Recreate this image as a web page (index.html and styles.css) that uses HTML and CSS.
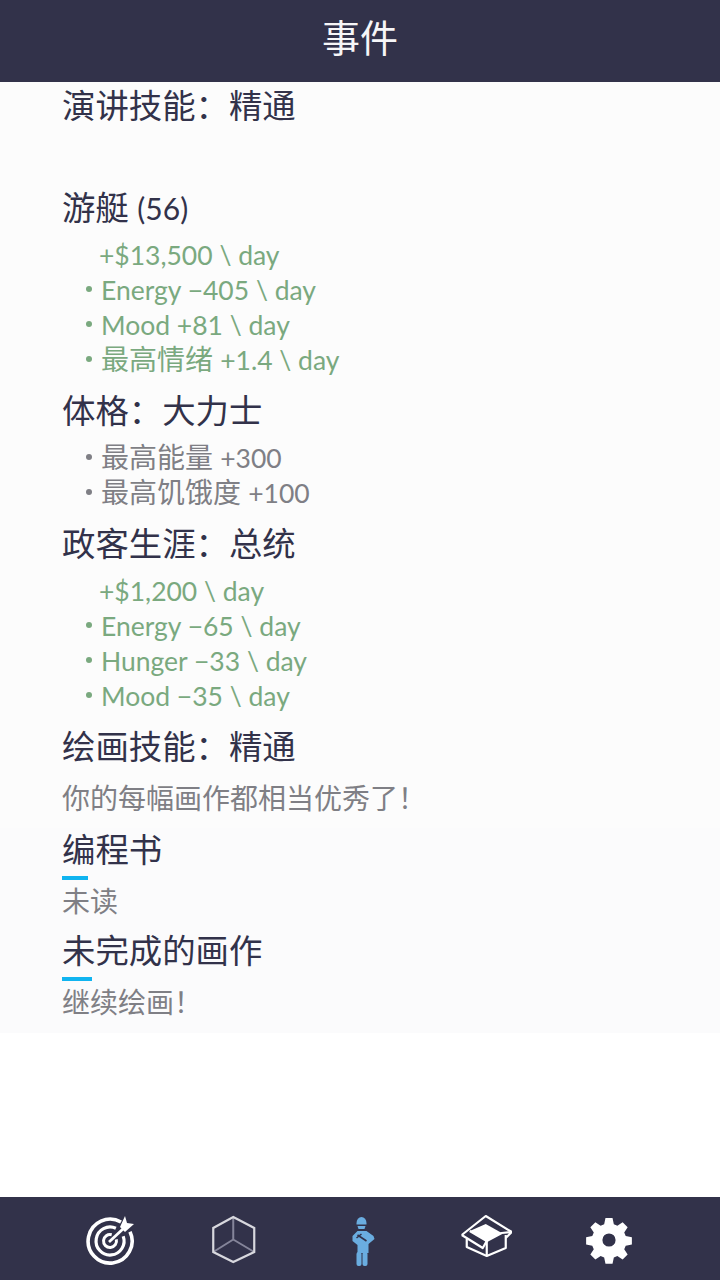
FILE: index.html
```html
<!DOCTYPE html>
<html lang="zh-CN">
<head>
    <meta charset="UTF-8">
    <title>事件</title>
    <link rel="stylesheet" href="styles.css">
</head>
<body>
    <header class="top-bar">事件</header>

    <main class="content">
        <section class="events">
            <h2 class="title">演讲技能：精通</h2>
            <div class="spacer"></div>

            <h2 class="title">游艇 <span class="latin">(56)</span></h2>
            <ul class="stats green">
                <li class="no-dot"><span class="latin">+$13,500 \ day</span></li>
                <li><span class="latin">Energy −405 \ day</span></li>
                <li><span class="latin">Mood +81 \ day</span></li>
                <li>最高情绪 <span class="latin">+1.4 \ day</span></li>
            </ul>

            <h2 class="title">体格：大力士</h2>
            <ul class="stats grey">
                <li>最高能量 <span class="latin">+300</span></li>
                <li>最高饥饿度 <span class="latin">+100</span></li>
            </ul>

            <h2 class="title">政客生涯：总统</h2>
            <ul class="stats green">
                <li class="no-dot"><span class="latin">+$1,200 \ day</span></li>
                <li><span class="latin">Energy −65 \ day</span></li>
                <li><span class="latin">Hunger −33 \ day</span></li>
                <li><span class="latin">Mood −35 \ day</span></li>
            </ul>

            <h2 class="title">绘画技能：精通</h2>
            <p class="note">你的每幅画作都相当优秀了！</p>
        </section>

        <section class="items">
            <div class="item">
                <h2 class="title">编程书</h2>
                <div class="underline short"></div>
                <p class="note">未读</p>
            </div>
            <div class="item">
                <h2 class="title">未完成的画作</h2>
                <div class="underline"></div>
                <p class="note">继续绘画！</p>
            </div>
        </section>
    </main>

    <nav class="bottom-bar">
        <svg class="icon" width="56" height="56" viewBox="0 0 56 56">
            <g fill="none" stroke="#fff">
                <path stroke-width="3.600" d="M39 12A22 22 0 1 0 48 21.700"/>
                <path stroke-width="3.200" d="M33.900 18.300A14 14 0 1 0 41.200 26.200"/>
                <path stroke-width="3" d="M29.700 24.700A6.500 6.500 0 1 0 34.300 29.300"/>
                <path stroke-width="2.800" d="M27 32L42 18"/>
            </g>
            <path fill="#fff" d="M38 17L43 6l2 7 7 1-9 8z"/>
        </svg>
        <svg class="icon" width="56" height="56" viewBox="0 0 56 56">
            <g transform="translate(-1.750 0)">
                <path fill="none" stroke="#85859a" stroke-width="2" d="M28 29.500V7M28 29.500L8 42M28 29.500L49 42"/>
                <path fill="none" stroke="#d8d8de" stroke-width="2.200" d="M28 7L49 18V42L28 52L8 42V18z"/>
            </g>
        </svg>
        <svg class="icon" width="56" height="56" viewBox="0 0 56 56">
            <g transform="translate(0.500 0)">
                <g fill="#6aade0">
                    <path d="M24 13a5 6 0 0 1 10 0v1.500h-10z"/>
                    <path d="M25 16h8l-1 3h-6z"/>
                    <path d="M25 21h9l7 5 1 3-6 5v9h-11v-8l-5-4 0-5z"/>
                    <rect x="24" y="42" width="5" height="14" rx="2"/>
                    <rect x="30" y="42" width="5" height="14" rx="2"/>
                </g>
                <path fill="none" stroke="#32324a" stroke-width="1.600" d="M25 25l9 6M24 28l5-4"/>
            </g>
        </svg>
        <svg class="icon" width="56" height="56" viewBox="0 0 56 56">
            <g transform="translate(2.750 0)">
                <g fill="none" stroke="#fff" stroke-width="2.200" stroke-linejoin="round">
                    <path d="M3 25L27 6L53 22"/>
                    <path d="M3 25L24 38L28 31L11 21"/>
                    <path d="M8 29V37L28 46L47 38V25"/>
                    <path d="M28 31V46"/>
                    <path d="M28 31L43 23L53 22L47 28"/>
                </g>
                <path fill="#fff" d="M11 21L27 14L43 23L28 31z"/>
            </g>
        </svg>
        <svg class="icon" width="56" height="56" viewBox="0 0 56 56">
            <g transform="translate(28 30) scale(0.880) translate(-28 -28)">
                <path fill="#fff" fill-rule="evenodd" d="M24 3h8l1.500 7 4 1.700 6-3.900 5.700 5.700-3.900 6 1.700 4 7 1.500v8l-7 1.500-1.700 4 3.900 6-5.700 5.700-6-3.900-4 1.700-1.500 7h-8l-1.500-7-4-1.700-6 3.900-5.700-5.700 3.900-6-1.700-4-7-1.500v-8l7-1.500 1.700-4-3.900-6 5.700-5.700 6 3.900 4-1.700zM28 20.500a7.500 7.500 0 1 0 0 15a7.500 7.500 0 1 0 0-15z"/>
            </g>
        </svg>
    </nav>
</body>
</html>
```

FILE: styles.css
```css
html, body {
    margin: 0;
    height: 100%;
}

body {
    display: flex;
    flex-direction: column;
    height: 1280px;
    background-color: white;
    font-family: "Lato", "Noto Sans CJK SC", sans-serif;
}

.top-bar {
    height: 82px;
    line-height: 75px;
    text-align: center;
    font-size: 38px;
    color: #f6f6f8;
    background-color: #32324a;
}

.content {
    flex-grow: 1;
}

.events {
    padding: 0 0 5px 62px;
    background-color: #fcfcfc;
}

.items {
    padding: 0 0 3px 62px;
    background-color: #fbfbfc;
}

.title {
    margin: 0;
    height: 50px;
    line-height: 46px;
    font-size: 33.400px;
    font-weight: normal;
    color: #32324a;
}

.title .latin {
    font-size: 30px;
}

.latin {
    font-size: 26.500px;
    line-height: 1;
}

.spacer {
    height: 52px;
}

.stats {
    list-style-type: none;
    margin: 3px 0 10px;
    padding: 0 0 0 39px;
    font-size: 28px;
    line-height: 35px;
}

.stats li {
    position: relative;
    height: 35px;
}

.stats li::before {
    content: "";
    position: absolute;
    left: -15px;
    top: 14px;
    width: 6px;
    height: 6px;
    border-radius: 50%;
    background-color: currentColor;
}

.stats li.no-dot {
    margin-left: -2px;
}

.stats li.no-dot::before {
    display: none;
}

.green {
    color: #7aa97f;
}

.grey {
    color: #7f7f85;
}

.note {
    margin: 0;
    height: 50px;
    line-height: 50px;
    font-size: 28px;
    color: #7f7f85;
}

.item {
    height: 101px;
}

.item .title {
    height: 48px;
    line-height: 43px;
}

.item .note {
    height: 45px;
    line-height: 43px;
}

.underline {
    width: 30px;
    height: 4px;
    background-color: #10b4f0;
}

.underline.short {
    width: 26px;
}

.bottom-bar {
    flex-shrink: 0;
    height: 81px;
    display: flex;
    align-items: center;
    justify-content: space-between;
    padding: 0 83px 2px 82px;
    background-color: #32324a;
}

.icon {
    display: block;
}
```
